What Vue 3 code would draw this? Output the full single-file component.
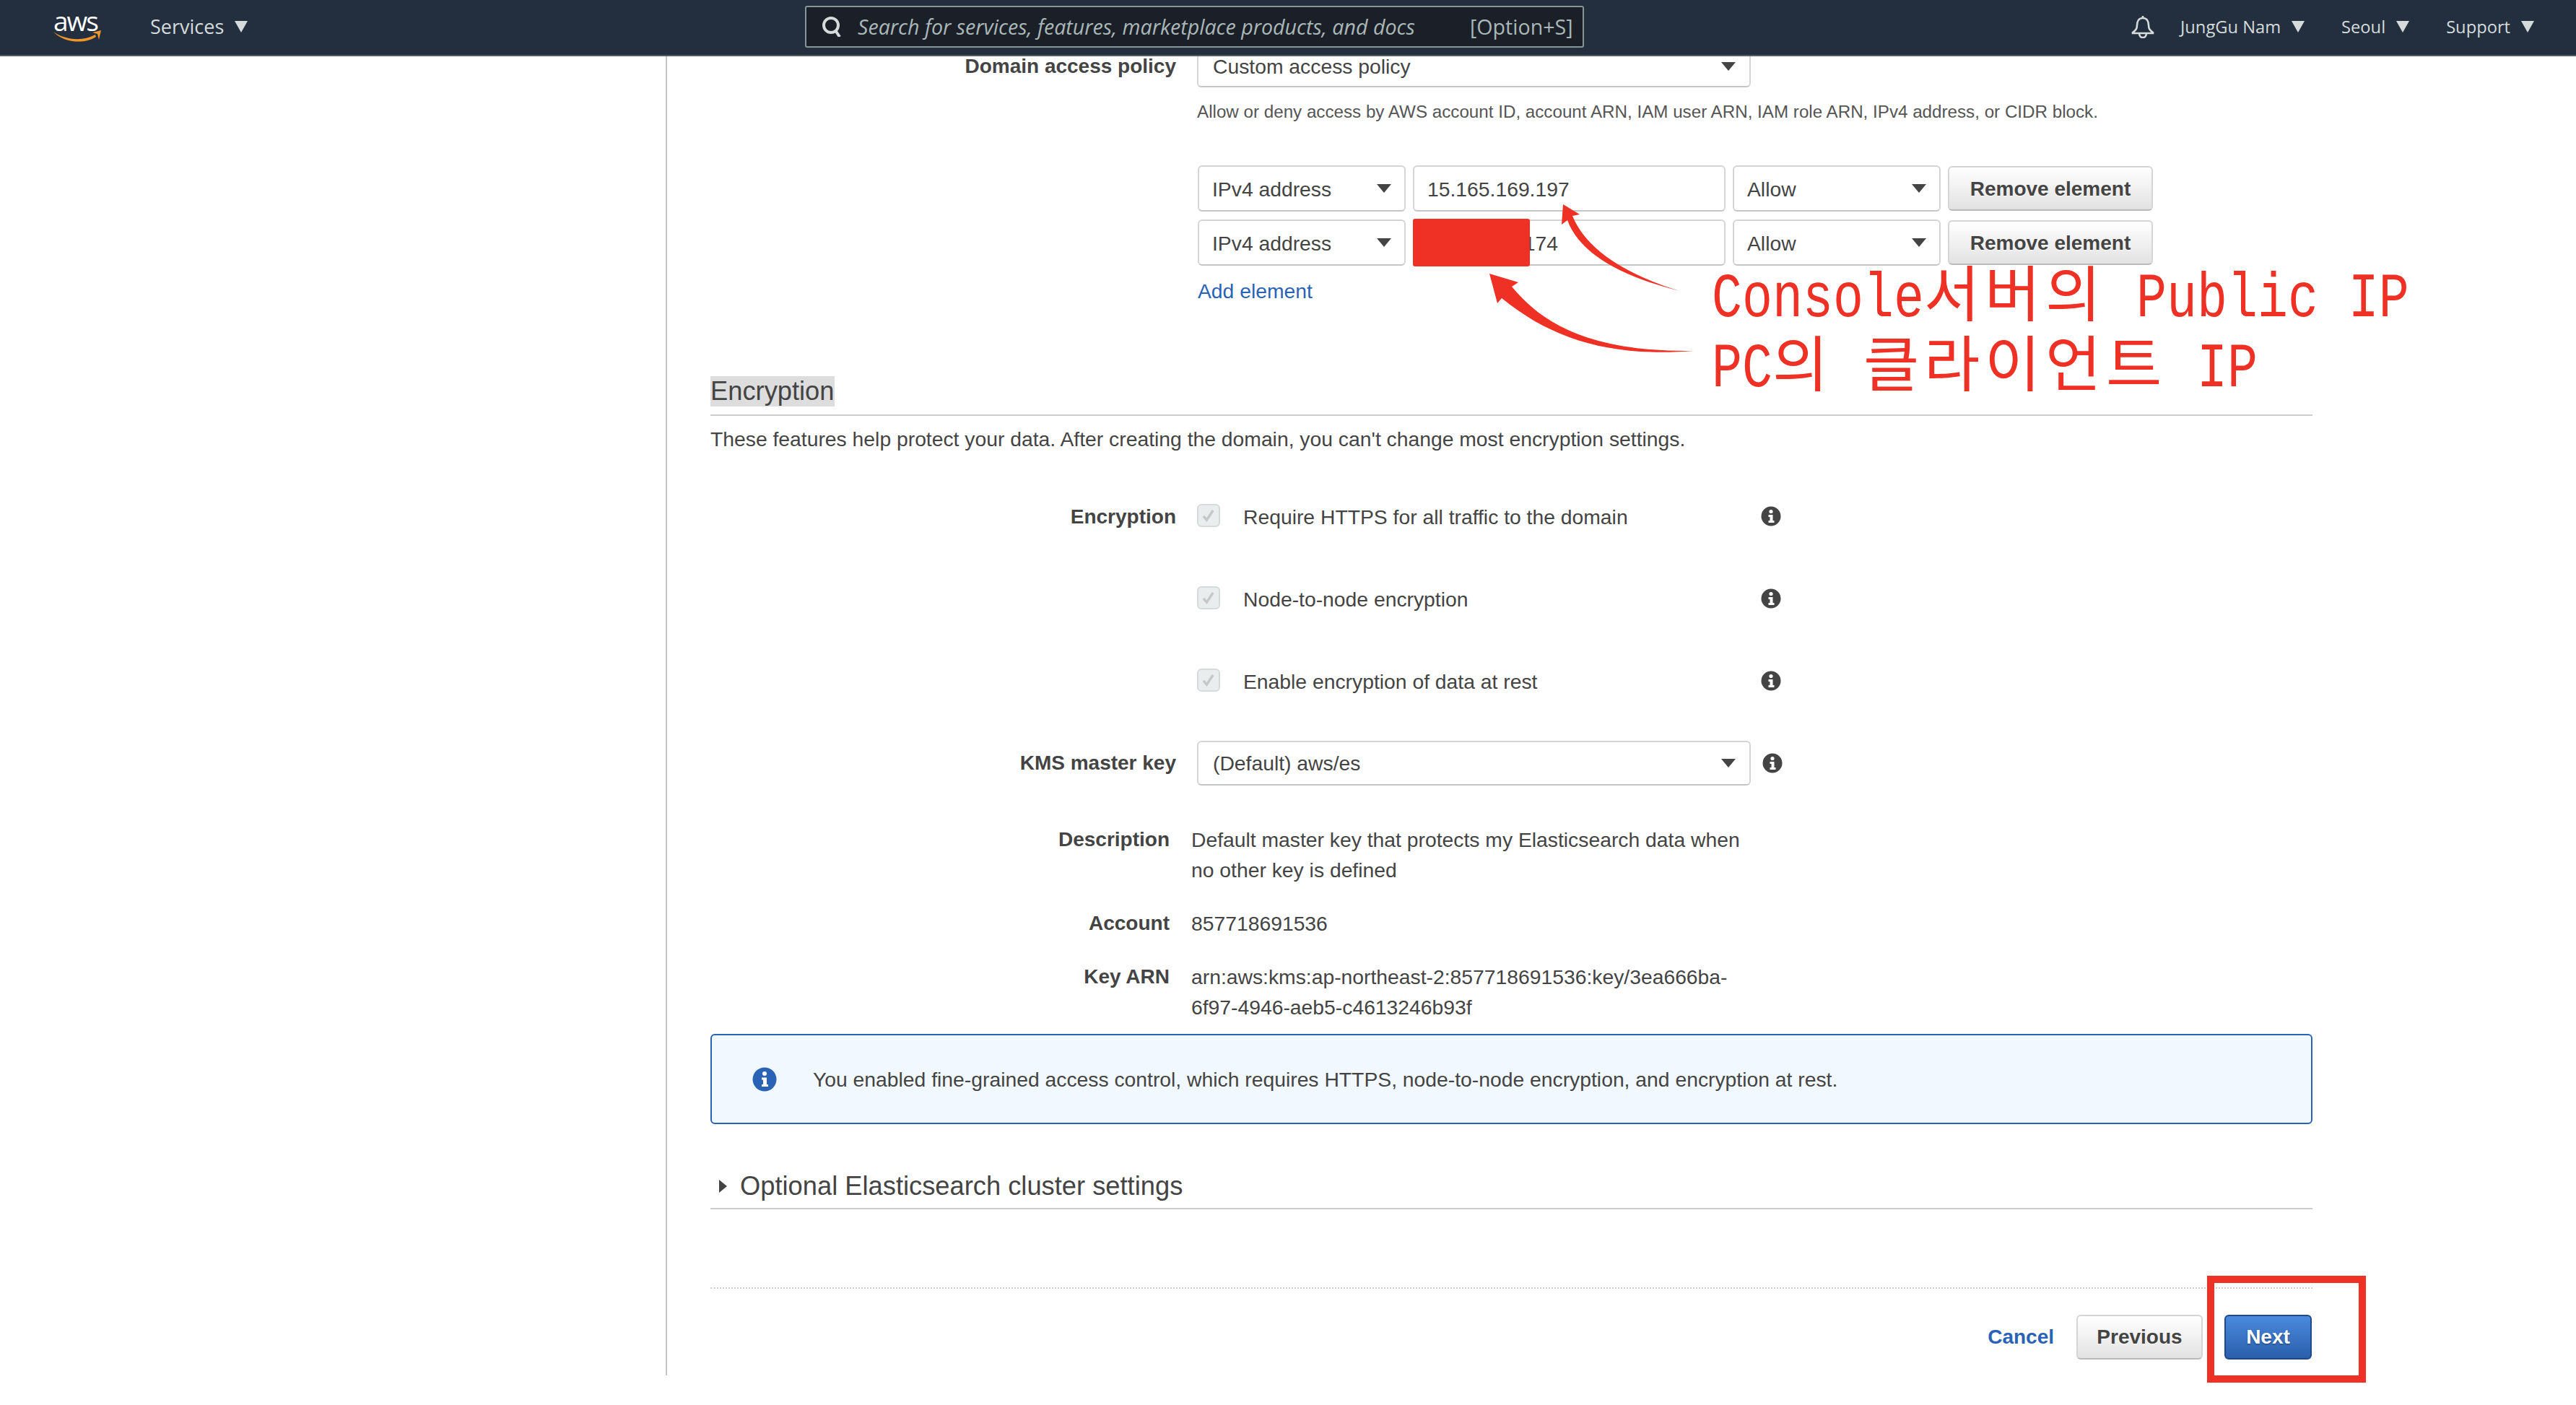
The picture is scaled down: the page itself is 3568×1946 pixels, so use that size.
<script setup>
const cell = 42

const noteLines = [
  [
    { text: 'Console', cjk: false },
    { text: '서버의', cjk: true },
    { text: ' Public IP', cjk: false }
  ],
  [
    { text: 'PC', cjk: false },
    { text: '의', cjk: true },
    { text: ' ', cjk: false },
    { text: '클라이언트', cjk: true },
    { text: ' IP', cjk: false }
  ]
]

const ipRows = ['15.165.169.197', '00.000.00.174']

const checks = [
  'Require HTTPS for all traffic to the domain',
  'Node-to-node encryption',
  'Enable encryption of data at rest'
]
</script>

<template>
  <div class="page">
    <header class="topbar">
      <div class="logo">
        <span class="logo-text">aws</span>
        <svg class="smile" viewBox="0 0 66 16" width="66" height="16">
          <path d="M0 2 C14 12 38 17 58 6 L59 9 C42 20 14 17 0 2 Z" fill="#f0962a"/>
          <path d="M54 3 L66 0 L63 13 L61 5 Z" fill="#f0962a"/>
        </svg>
      </div>
      <div class="nav-item services">Services<i class="nav-caret"></i></div>
      <div class="search">
        <svg class="search-icon" viewBox="0 0 28 28" width="28" height="28">
          <circle cx="12" cy="12" r="10" fill="none" stroke="#d5dbdb" stroke-width="4"/>
          <path d="M18 19 L24 28" stroke="#d5dbdb" stroke-width="4"/>
        </svg>
        <span class="placeholder">Search for services, features, marketplace products, and docs</span>
        <span class="shortcut">[Option+S]</span>
      </div>
      <div class="nav-right">
        <svg class="bell" viewBox="0 0 32 32" width="32" height="32">
          <path d="M16 1 V4 M16 4 C10 4 8 9 8 14 C8 19 6 21 2 24 V25 H30 V24 C26 21 24 19 24 14 C24 9 22 4 16 4 Z M11 25 C11 33 21 33 21 25" fill="none" stroke="#d5dbdb" stroke-width="2.6"/>
        </svg>
        <div class="nav-item user">JungGu Nam<i class="nav-caret"></i></div>
        <div class="nav-item region">Seoul<i class="nav-caret"></i></div>
        <div class="nav-item support">Support<i class="nav-caret"></i></div>
      </div>
    </header>

    <div class="main">
      <aside class="side"></aside>
      <section class="content">
        <div class="form-row first">
          <label class="label">Domain access policy</label>
          <div class="select policy">Custom access policy<i class="caret"></i></div>
        </div>
        <p class="helper">Allow or deny access by AWS account ID, account ARN, IAM user ARN, IAM role ARN, IPv4 address, or CIDR block.</p>

        <div v-for="ip in ipRows" :key="ip" class="ip-row">
          <div class="select type">IPv4 address<i class="caret"></i></div>
          <div class="input">{{ ip }}</div>
          <div class="select effect">Allow<i class="caret"></i></div>
          <button class="btn remove">Remove element</button>
        </div>
        <a class="add-link">Add element</a>

        <div class="section-head"><h2 class="picked">Encryption</h2></div>
        <p class="intro">These features help protect your data. After creating the domain, you can't change most encryption settings.</p>

        <div v-for="(c, i) in checks" :key="c" class="form-row check-row">
          <label class="label">{{ i === 0 ? 'Encryption' : '' }}</label>
          <span class="checkbox">
            <svg viewBox="0 0 32 32" width="30" height="30">
              <path d="M8 17 L13 23 L23 8" fill="none" stroke="#c4c8c8" stroke-width="4"/>
            </svg>
          </span>
          <span class="check-text">{{ c }}</span>
          <svg class="info" viewBox="0 0 28 28" width="28" height="28">
            <circle cx="14" cy="14" r="13.5" fill="#444"/>
            <circle cx="14" cy="7.5" r="2.6" fill="#fff"/>
            <path d="M10.5 12 H16.5 V20 H18.5 V23 H10.5 V20 H12.5 V15 H10.5 Z" fill="#fff"/>
          </svg>
        </div>

        <div class="form-row kms-row">
          <label class="label">KMS master key</label>
          <div class="select kms">(Default) aws/es<i class="caret"></i></div>
          <svg class="info kms-info" viewBox="0 0 28 28" width="28" height="28">
            <circle cx="14" cy="14" r="13.5" fill="#444"/>
            <circle cx="14" cy="7.5" r="2.6" fill="#fff"/>
            <path d="M10.5 12 H16.5 V20 H18.5 V23 H10.5 V20 H12.5 V15 H10.5 Z" fill="#fff"/>
          </svg>
        </div>

        <dl class="key-info">
          <div class="key-row">
            <dt>Description</dt>
            <dd>Default master key that protects my Elasticsearch data when no other key is defined</dd>
          </div>
          <div class="key-row">
            <dt>Account</dt>
            <dd>857718691536</dd>
          </div>
          <div class="key-row">
            <dt>Key ARN</dt>
            <dd>arn:aws:kms:ap-northeast-2:857718691536:key/3ea666ba-<br>6f97-4946-aeb5-c4613246b93f</dd>
          </div>
        </dl>

        <div class="alert">
          <svg viewBox="0 0 34 34" width="34" height="34">
            <circle cx="17" cy="17" r="16.5" fill="#2a63b5"/>
            <circle cx="17" cy="9" r="3" fill="#fff"/>
            <path d="M13 14.5 H20 V24 H22 V27 H13 V24 H15 V17.5 H13 Z" fill="#fff"/>
          </svg>
          <span>You enabled fine-grained access control, which requires HTTPS, node-to-node encryption, and encryption at rest.</span>
        </div>

        <div class="optional"><i class="side-caret"></i>Optional Elasticsearch cluster settings</div>

        <div class="actions">
          <a class="cancel">Cancel</a>
          <button class="btn previous">Previous</button>
          <button class="btn next">Next</button>
        </div>
      </section>
    </div>

    <!-- annotations drawn over the screenshot -->
    <div class="redact"></div>
    <svg class="arrows" viewBox="0 0 3568 1946" width="3568" height="1946">
      <path d="M2165 283 L2188 297 L2178 299 Q2205 365 2326 403 Q2195 370 2171 305 L2163 311 Z" fill="#ee3124"/>
      <path d="M2063 379 L2103 391 L2094 397 C2130 440 2190 488 2346 486 C2230 495 2150 470 2080 413 L2074 420 Z" fill="#ee3124"/>
    </svg>
    <div class="note">
      <div v-for="(line, i) in noteLines" :key="i" class="note-line">
        <template v-for="(seg, j) in line" :key="j">
          <span v-if="seg.cjk" class="cjk">{{ seg.text }}</span>
          <span v-else class="lat" :style="{ width: seg.text.length * cell + 'px' }">{{ seg.text }}</span>
        </template>
      </div>
    </div>
    <div class="next-box"></div>
  </div>
</template>

<style scoped>
.page {
  position: relative;
  width: 3568px;
  height: 1946px;
  overflow: hidden;
  background: #fff;
  color: #444;
  font-family: "Liberation Sans", Arial, sans-serif;
  font-size: 28.3px;
  line-height: 28px;
}

/* top bar */
.topbar {
  display: flex;
  align-items: center;
  box-sizing: border-box;
  height: 78px;
  padding-bottom: 2px;
  background: #232f3e;
  border-bottom: 2px solid #545b64;
  font-family: "Open Sans", sans-serif;
  color: #d5dbdb;
  font-size: 23.7px;
}
.logo {
  display: flex;
  flex-direction: column;
  margin-left: 74px;
  width: 66px;
}
.logo-text {
  color: #fff;
  font-size: 37px;
  line-height: 26px;
  height: 26px;
  letter-spacing: -2px;
}
.smile {
  display: block;
}
.nav-item {
  display: flex;
  align-items: center;
  white-space: nowrap;
}
.nav-caret {
  width: 0;
  height: 0;
  margin-left: 15px;
  border-left: 9px solid transparent;
  border-right: 9px solid transparent;
  border-top: 16px solid #d5dbdb;
}
.services {
  width: 138px;
  margin-left: 68px;
  font-size: 27px;
}
.search {
  display: flex;
  align-items: center;
  box-sizing: border-box;
  width: 1079px;
  height: 58px;
  margin-left: 769px;
  padding-left: 22px;
  background: #1b2028;
  border: 2px solid #879596;
  border-radius: 3px;
  font-size: 28.6px;
}
.search-icon {
  flex: none;
}
.placeholder {
  margin-left: 21px;
  width: 848px;
  color: #aab7b8;
  font-style: italic;
  white-space: nowrap;
}
.shortcut {
  color: #aab7b8;
  white-space: nowrap;
}
.nav-right {
  display: flex;
  align-items: center;
  margin-left: auto;
  padding-right: 58px;
}
.user {
  margin-left: 36px;
}
.region {
  margin-left: 51px;
}
.support {
  margin-left: 51px;
}

/* layout */
.main {
  display: flex;
  height: 1827px;
}
.side {
  flex: none;
  width: 922px;
  border-right: 2px solid #c6c6c6;
}
.content {
  box-sizing: border-box;
  width: 2219px;
  margin-left: 60px;
}
.form-row {
  display: flex;
}
.label {
  flex: none;
  width: 645px;
  margin-right: 29px;
  text-align: right;
  font-size: 28px;
  font-weight: 700;
  white-space: nowrap;
}

/* selects and inputs */
.select,
.input {
  position: relative;
  box-sizing: border-box;
  height: 64px;
  line-height: 62px;
  padding-left: 18px;
  background: #fff;
  border: 2px solid #d5d5d5;
  border-bottom-color: #c6c6c6;
  border-radius: 6px;
  white-space: nowrap;
}
.caret {
  position: absolute;
  right: 18px;
  top: 24px;
  width: 0;
  height: 0;
  border-left: 10px solid transparent;
  border-right: 10px solid transparent;
  border-top: 12px solid #444;
}
.policy {
  width: 767px;
  height: 43px;
  line-height: 28px;
  padding-left: 20px;
  border-top: none;
  border-radius: 0 0 6px 6px;
}
.policy .caret {
  top: 8px;
  right: 19px;
}
.helper {
  margin: 17px 0 0 674px;
  font-size: 24.2px;
  line-height: 34px;
  color: #555;
}
.ip-row {
  display: flex;
  margin: 11px 0 0 675px;
  gap: 10px;
}
.helper + .ip-row {
  margin-top: 57px;
}
.type,
.effect {
  width: 288px;
}
.input {
  width: 433px;
}
.btn {
  box-sizing: border-box;
  height: 62px;
  font-family: inherit;
  font-size: 28px;
  font-weight: 700;
  color: #444;
  background: linear-gradient(#fff, #e2e2e2);
  border: 2px solid #d5d5d5;
  border-bottom-color: #b9b9b9;
  border-radius: 6px;
  text-shadow: 0 1px 1px #fff;
  padding: 0;
}
.remove {
  width: 284px;
  margin: 1px 0 0 0;
  padding-top: 2px;
}
.add-link {
  display: block;
  margin: 21px 0 0 675px;
  color: #2a63b5;
}

/* encryption section */
.section-head {
  margin-top: 104px;
  padding-bottom: 11px;
  border-bottom: 2px solid #ccc;
}
h2 {
  margin: 0;
  font-size: 36.3px;
  font-weight: 400;
  line-height: 42px;
}
.picked {
  display: inline-block;
  vertical-align: top;
  background: #ddd;
}
.intro {
  margin: 18px 0 0;
}
.check-row {
  align-items: flex-start;
  height: 36px;
  margin-top: 78px;
  line-height: 36px;
}
.intro + .check-row {
  margin-top: 76px;
}
.checkbox {
  flex: none;
  box-sizing: border-box;
  width: 32px;
  height: 32px;
  display: flex;
  align-items: center;
  justify-content: center;
  background: #eaeded;
  border: 2px solid #d5dbdb;
  border-radius: 6px;
}
.check-text {
  flex: none;
  width: 717px;
  margin-left: 32px;
}
.info {
  flex: none;
  margin-top: 3px;
}
.kms-row {
  align-items: center;
  margin-top: 64px;
}
.kms {
  flex: none;
  width: 767px;
  height: 62px;
  line-height: 58px;
  padding-left: 20px;
}
.kms .caret {
  top: 23px;
  right: 19px;
}
.kms-info {
  margin: 0 0 0 16px;
}

/* key details */
.key-info {
  margin: 54px 0 0;
}
.key-row {
  display: flex;
  margin-top: 32px;
  line-height: 42px;
}
.key-row:first-child {
  margin-top: 0;
}
dt {
  flex: none;
  width: 636px;
  margin-right: 30px;
  text-align: right;
  font-size: 28px;
  font-weight: 700;
}
dd {
  margin: 0;
  width: 780px;
}

/* alert */
.alert {
  display: flex;
  align-items: center;
  box-sizing: border-box;
  height: 125px;
  margin-top: 16px;
  padding-left: 56px;
  background: #f1f8ff;
  border: 2px solid #2a63b5;
  border-radius: 6px;
}
.alert span {
  margin-left: 50px;
}

.optional {
  display: flex;
  align-items: center;
  margin-top: 65px;
  padding-bottom: 9px;
  border-bottom: 2px solid #ccc;
  font-size: 36.3px;
  line-height: 42px;
}
.side-caret {
  width: 0;
  height: 0;
  margin: 0 18px 0 12px;
  border-top: 9px solid transparent;
  border-bottom: 9px solid transparent;
  border-left: 11px solid #444;
}

/* footer buttons */
.actions {
  display: flex;
  align-items: center;
  justify-content: flex-end;
  margin-top: 108px;
  padding-top: 36px;
  padding-right: 1px;
  border-top: 2px dotted #ccc;
}
.cancel {
  margin-right: 31px;
  color: #2a63b5;
  font-size: 28px;
  font-weight: 700;
}
.previous {
  width: 175px;
}
.next {
  width: 121px;
  margin-left: 30px;
  color: #fff;
  background: linear-gradient(#4a8ade, #2a5fab);
  border-color: #1f4a8a;
  text-shadow: 0 1px 2px #1b3d70;
}

/* annotations */
.redact {
  position: absolute;
  left: 1957px;
  top: 303px;
  width: 162px;
  height: 66px;
  background: #ee3124;
  border-radius: 3px;
}
.arrows {
  position: absolute;
  left: 0;
  top: 0;
  pointer-events: none;
}
.note {
  position: absolute;
  left: 2371px;
  top: 353px;
  color: #ee3124;
  font-family: "Liberation Mono", monospace;
  font-size: 88px;
  line-height: 97px;
  white-space: pre;
}
.note-line {
  display: flex;
  align-items: baseline;
  height: 97px;
}
.lat {
  display: inline-block;
  transform: scaleX(0.795);
  transform-origin: left;
}
.cjk {
  font-family: "Noto Sans CJK KR", sans-serif;
  font-size: 84px;
  letter-spacing: 6.7px;
}
.next-box {
  position: absolute;
  left: 3057px;
  top: 1767px;
  width: 220px;
  height: 148px;
  box-sizing: border-box;
  border: 10px solid #ee3124;
}
</style>

<style>
body {
  margin: 0;
  background: #fff;
}
</style>
